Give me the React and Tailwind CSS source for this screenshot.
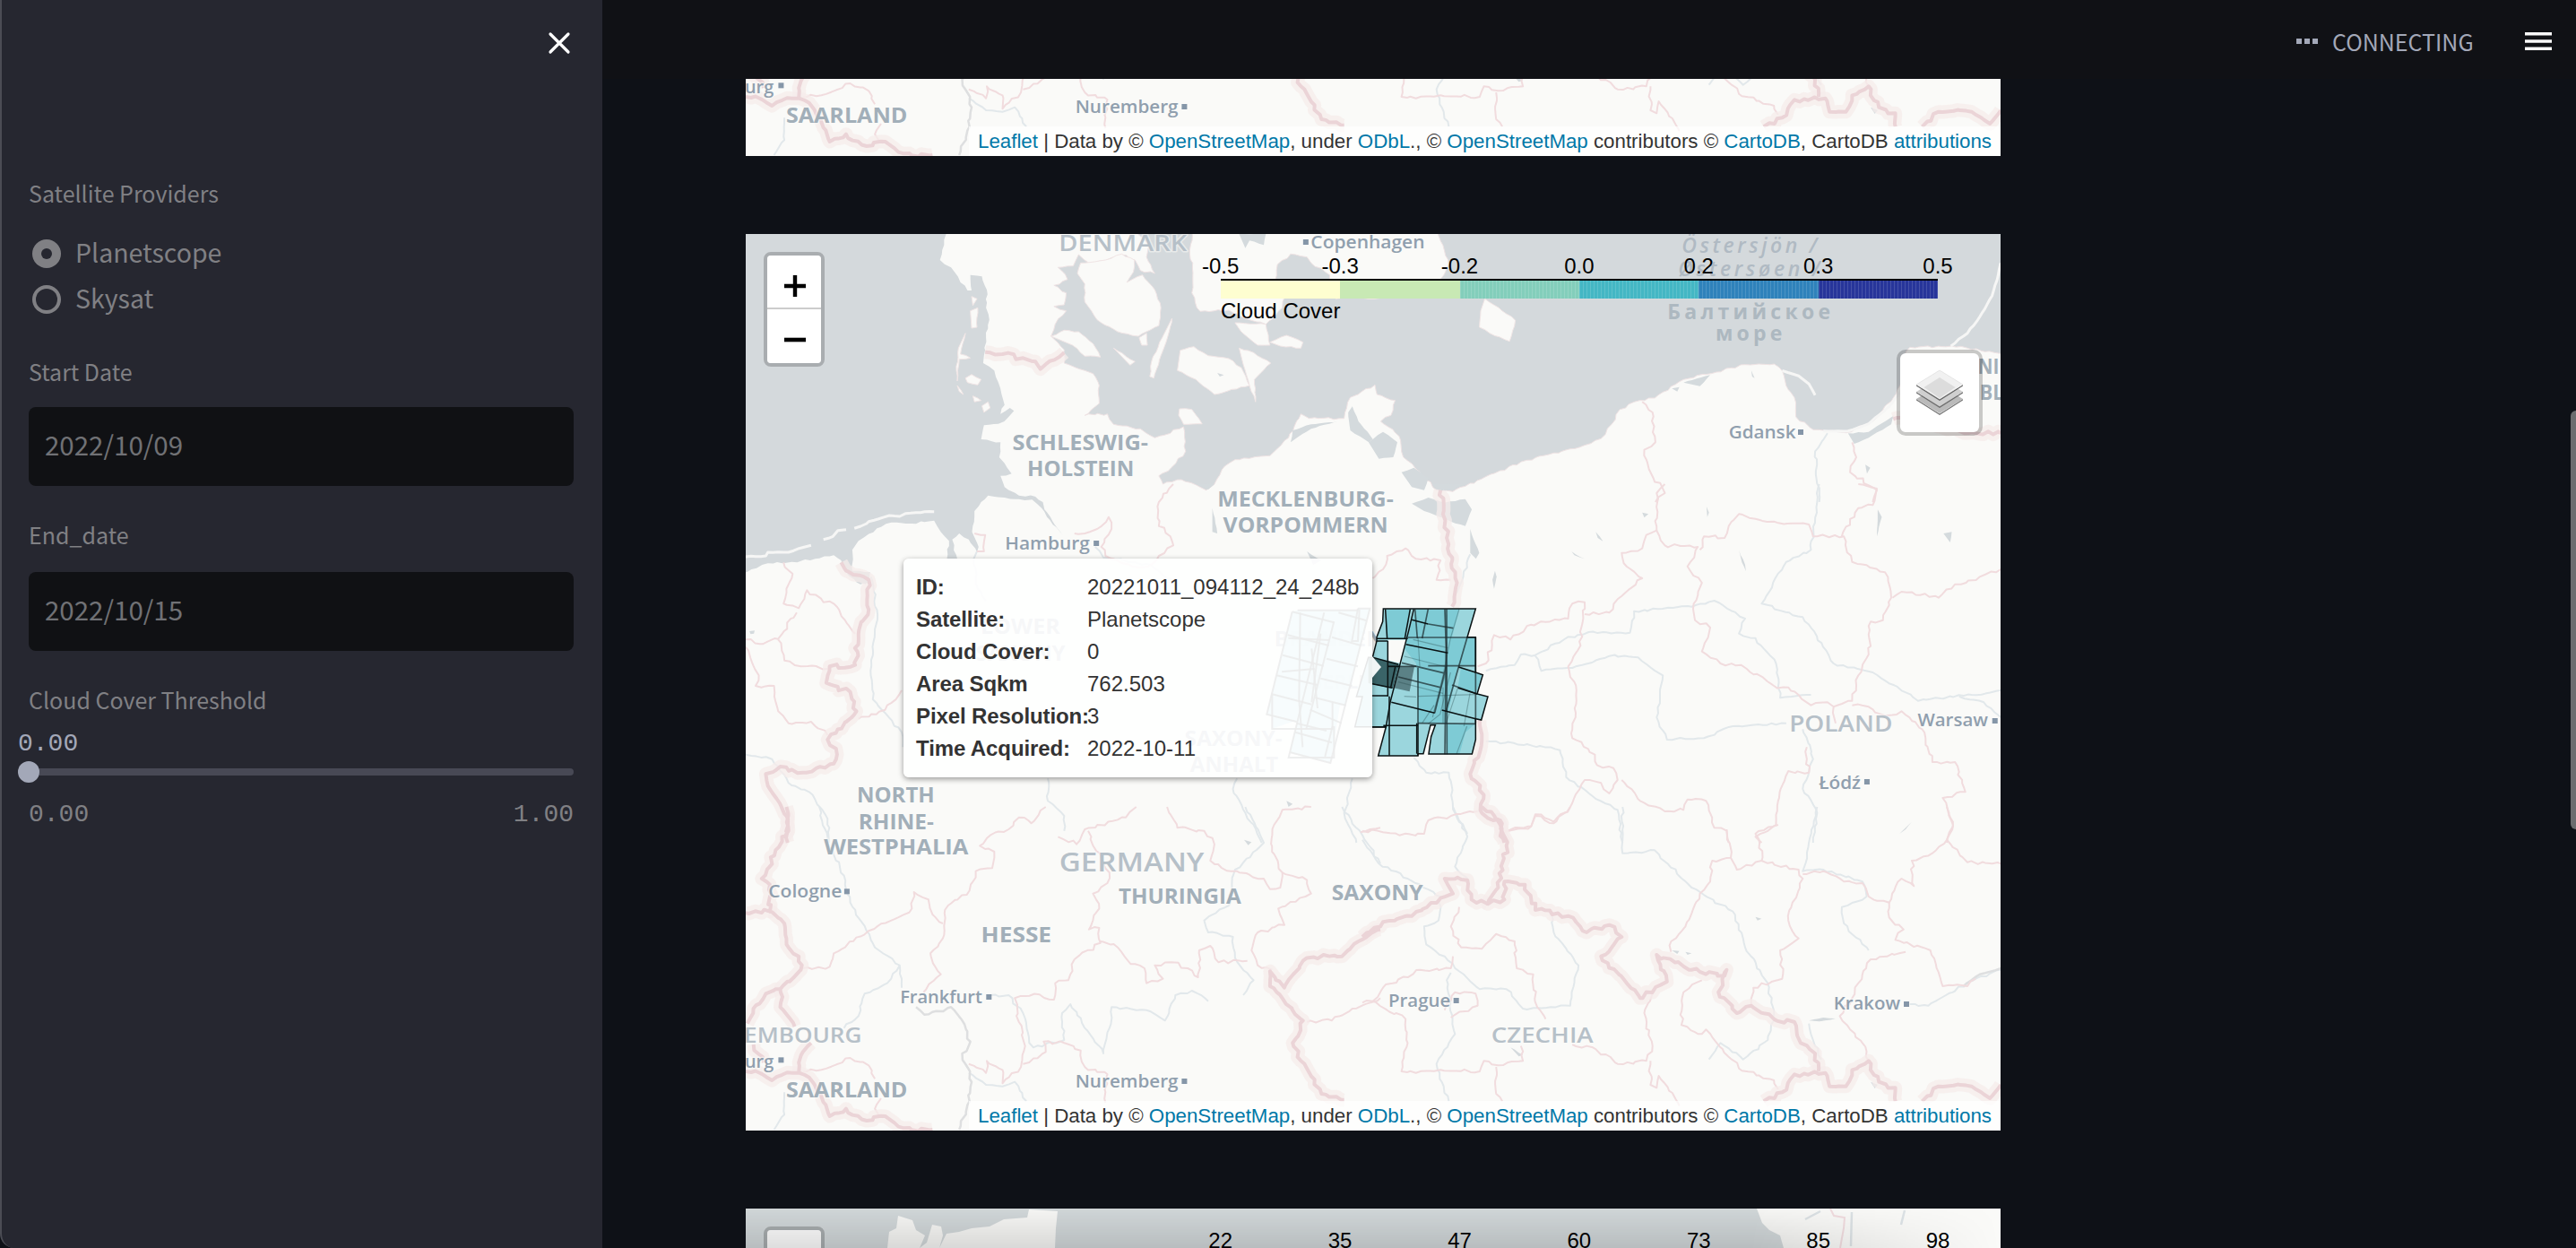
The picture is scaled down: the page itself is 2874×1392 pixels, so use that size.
import React from "react";

/* ---------- map geometry ---------- */

// Every sector has its own local grid; the two numbers are its origin on the map sheet.
const ORIGIN = {
  nw: [820, 60],
  ne: [1520, 60],
  w: [820, 540],
  e: [1520, 540],
  sw: [820, 900],
  se: [1520, 900],
};
const KX = 700 / 1524.5;
const KY = 1 / 3;

const parse = (s) => s.trim().split(/\s+/).map((p) => p.split(",").map(Number));

function project(sector, s) {
  const [ox, oy] = ORIGIN[sector];
  return parse(s).map(([x, y]) => [ox + x * KX, oy + y * KY]);
}

function noise(n) {
  const v = Math.sin(n * 12.9898 + 4.1) * 43758.5453;
  return v - Math.floor(v) - 0.5;
}

// Breaks long straight runs into short wobbly ones, as surveyed lines look.
function roughen(points, amp) {
  const out = [];
  points.forEach((p, i) => {
    out.push(p);
    const q = points[i + 1];
    if (!q) return;
    const d = Math.hypot(q[0] - p[0], q[1] - p[1]);
    const n = Math.min(16, Math.floor(d / 5));
    for (let k = 1; k < n; k++) {
      const t = k / n;
      out.push([
        p[0] + (q[0] - p[0]) * t + noise(p[0] + k * 7.3) * amp,
        p[1] + (q[1] - p[1]) * t + noise(p[1] + k * 3.7) * amp,
      ]);
    }
  });
  return out;
}

const toPath = (points, close) =>
  "M" + points.map((p) => p[0].toFixed(1) + " " + p[1].toFixed(1)).join("L") + (close ? "Z" : "");

const line = (sector, s, amp = 4) => toPath(roughen(project(sector, s), amp), false);
const area = (sector, s, amp = 2.5) => toPath(roughen(project(sector, s), amp), true);

const NORTH_SEA = area(
  "nw",
  "20,595 513,595 513,603 508,640 498,690 525,715 548,765 565,792 575,792 572,740 600,745 612,790 610,850 618,890 610,950 605,1010 603,1035 630,1060 640,1100 648,1140 655,1175 645,1205 668,1185 678,1195 665,1215 640,1238 605,1243 598,1290 645,1300 642,1350 655,1370 672,1405 645,1412 655,1450 690,1478 730,1482 748,1500 752,1525 785,1590 800,1615 790,1600 765,1560 745,1520 722,1492 690,1490 655,1485 615,1478 598,1500 582,1530 576,1600 592,1650 588,1668 568,1625 545,1605 528,1625 540,1690 515,1690 520,1630 500,1600 484,1562 430,1572 380,1568 345,1588 300,1630 285,1660 285,1730 328,1735 328,1772 305,1775 270,1735 258,1695 240,1678 160,1697 80,1705 40,1725 20,1740"
);

const BALTIC = area(
  "nw",
  "975,595 1005,640 1000,680 1020,735 985,725 972,690 940,672 900,692 860,700 835,672 822,710 785,715 808,755 775,775 805,800 800,840 775,845 805,860 778,905 768,945 800,990 800,1035 850,1060 870,1070 885,1110 885,1170 850,1210 905,1205 920,1240 985,1255 1020,1285 1090,1248 1095,1330 1060,1385 1030,1412 1040,1440 1085,1425 1130,1450 1145,1460 1165,1440 1190,1380 1215,1358 1300,1345 1345,1285 1375,1205 1395,1220 1480,1220 1495,1150 1555,1108 1560,1140 1604,1160 1594,1210 1569,1230 1614,1280 1624,1350 1664,1400 1704,1460 1744,1465 1824,1415 1924,1360 2064,1310 2104,1288 2130,1240 2150,1190 2185,1165 2235,1152 2305,1090 2385,1065 2455,1040 2525,1038 2545,1062 2554,1110 2574,1150 2578,1215 2620,1258 2700,1268 2765,1230 2815,1150 2840,1080 2842,1010 2855,982 2955,978 2995,985 3060,1000 3090,1000 3090,595 1707,595 1724,660 1734,705 1714,755 1660,790 1600,815 1460,820 1440,790 1445,740 1400,700 1390,680 1350,670 1318,705 1312,760 1335,815 1330,850 1290,905 1230,880 1200,858 1130,862 1110,800 1112,700 1105,670 1110,595"
);

const LAND_ISLANDS = [
  "832,735 840,700 900,690 940,670 970,690 968,730 952,765 990,740 1020,790 1035,850 1030,910 980,945 930,930 880,890 850,830 850,770",
  "1062,885 1055,930 1035,1010 1018,1085 1008,1080 1012,1030 1038,950",
  "1082,992 1115,980 1150,1010 1200,1020 1230,1050 1250,1110 1165,1140 1120,1090 1075,1060",
  "1225,985 1260,1000 1302,1035 1262,1090 1265,1165 1250,1110 1235,1040",
  "1215,900 1290,905 1300,975 1270,975 1230,930",
  "1300,965 1340,942 1380,965 1375,985 1325,978",
  "768,945 800,925 835,930 870,970 888,1015 850,1012 820,975",
  "1080,1188 1110,1190 1135,1238 1090,1240 1078,1210",
  "560,935 548,1005 572,1018 545,1022 540,1095 538,1060 543,985",
  "560,1085 575,1073 598,1090 590,1108 565,1100",
  "540,1110 555,1140 545,1130",
  "600,1178 615,1165 620,1185 605,1200",
  "578,1145 598,1160 582,1165",
  "572,860 590,850 588,915 575,918",
  "575,812 588,820 578,842",
  "920,985 972,1030 960,1042",
  "982,950 1000,935 1002,975 988,975",
  "1822,820 1864,860 1896,892 1882,962 1834,935 1809,915 1812,860",
].map((s) => area("nw", s, 1.5));

const WATER_BITS = [
  ["nw", "1225,603 1290,603 1285,640 1250,625 1240,650"],
  ["nw", "1172,1068 1188,1075 1178,1080"],
  ["nw", "1500,1180 1515,1230 1550,1290 1540,1300 1495,1260 1490,1200"],
  ["nw", "1350,1300 1355,1260 1400,1240 1465,1230 1400,1255 1370,1280"],
  ["ne", "15,1300 50,1265 85,1300 75,1350 40,1355"],
  ["ne", "95,1400 125,1385 160,1420 150,1460 120,1450"],
  ["ne", "780,1100 845,1075 820,1112"],
  ["ne", "945,1060 953,1085 947,1080"],
  ["ne", "1180,1270 1230,1265 1292,1210 1285,1240 1230,1285 1195,1305"],
  ["ne", "752,1120 770,1115 765,1130"],
  ["ne", "1222,1375 1234,1385 1226,1405"],
  ["e", "120,65 160,45 200,62 250,50 266,85 250,140 215,125 200,115 150,90"],
  ["e", "170,0 245,0 220,20 185,22"],
  ["e", "262,150 275,200 284,230 276,250 262,230"],
  ["e", "322,290 326,310 320,350 316,320"],
  ["e", "508,225 540,250 515,238"],
  ["e", "567,160 585,192 572,180"],
  ["e", "836,75 842,95 838,110"],
  ["e", "915,220 930,270 932,292 922,262"],
  ["e", "1252,85 1262,110 1250,175 1252,120"],
  ["e", "1412,165 1432,160 1428,195"],
  ["e", "680,95 695,100 685,112"],
  ["w", "1160,80 1172,165 1160,160"],
  ["w", "1390,225 1425,255 1405,270"],
  ["w", "300,310 322,312 318,335 305,328"],
  ["w", "35,492 48,490 46,500 38,502"],
  ["w", "1120,0 1165,0 1150,18"],
  ["w", "1340,1060 1355,1070 1345,1080"],
  ["se", "752,480 770,482 765,492"],
  ["se", "785,485 800,490 790,495"],
  ["se", "1085,715 1120,705 1150,708 1110,718"],
  ["se", "955,368 970,374 960,380"],
  ["se", "1305,90 1335,50 1320,75"],
  ["se", "1235,920 1252,930 1245,942"],
  ["se", "360,805 390,830 380,835"],
  ["sw", "1237,110 1255,118 1247,128"],
].map(([k, s]) => area(k, s, 1));

const SAND_BARS = [
  line("w", "26,243 75,240 80,228 130,228 170,210 185,205", 1),
  line("w", "215,185 238,175 250,155 270,152", 1),
  line("w", "290,148 320,132 325,125 375,105 400,108 415,98 440,95 484,92", 1),
  line("ne", "1430,978 1470,935 1500,880 1530,810 1545,740 1551,700", 1),
  line("ne", "1020,1060 1060,1078 1085,1105 1100,1142", 1),
  line("ne", "1120,1262 1180,1262 1230,1238 1280,1180 1320,1110", 1),
];

const STATE_BORDERS = [
  ["w", "118,262 140,300 125,350 118,400 155,415 175,355 215,395 240,400 292,500"],
  ["w", "26,520 60,535 105,518 150,430"],
  ["w", "105,520 120,590 160,610 225,618"],
  ["w", "26,545 58,640 50,675 95,675 105,760 130,800 185,795 225,840"],
  ["w", "405,690 365,755 300,785"],
  ["w", "582,165 608,170 605,225 588,225"],
  ["w", "825,165 850,165 880,150 908,110 915,150 890,210 900,240 965,275 1005,275 1030,240 1065,205 1058,175 1030,140 1030,60 1065,0"],
  ["sw", "458,620 500,560 475,490 505,440 510,345 570,280 585,215 625,205 630,150 595,130 620,95 665,75 690,35 720,55 755,0"],
  ["sw", "165,540 230,535 240,490 325,415 380,380 430,340 435,285 470,310 480,360 505,390"],
  ["sw", "785,100 830,125 850,75 950,35 975,0"],
  ["sw", "858,80 870,130 910,220 905,255 870,290 885,340 860,410 885,405 888,455 825,510 810,580 778,590 775,645 740,628 680,640 690,720 705,800 695,870 650,925 650,880 612,850 610,890 568,860"],
  ["sw", "700,860 755,820 750,785 800,790 840,815 850,870 905,895 900,990"],
  ["sw", "888,450 930,470 955,515 995,540 1000,590 1040,575 1020,530 1060,520 1100,540 1125,570 1128,480 1155,465 1175,520 1245,515"],
  ["sw", "1050,0 1075,70 1140,80 1165,125 1155,180 1205,215 1285,240 1300,275 1325,270 1330,220 1305,150 1310,60 1330,10 1400,0"],
  ["sw", "1330,220 1390,245 1400,290 1320,340 1335,395 1270,420 1255,480 1270,530 1305,545"],
  ["sw", "1520,85 1568,70"],
  ["sw", "165,885 210,880 280,840 325,865 340,910"],
  ["sw", "355,975 340,1010 360,1040"],
  ["sw", "1390,720 1450,715 1500,675 1568,640"],
  ["se", "0,80 50,85 90,95 150,90 160,45 280,15"],
  ["se", "345,85 410,65 420,30 465,55 505,0"],
  ["e", "345,1160 410,1145 420,1105 465,1130 505,1080 540,990 580,1000 600,1035 620,990 610,950 570,940 565,905 510,850 520,690 500,610 530,540 540,395 510,400 500,450 410,470 360,520 320,505 300,600 280,610"],
  ["e", "540,435 600,430 620,385 680,315 635,265 630,230 680,215 690,170 715,155 735,205 815,210 790,275 825,330 805,400 808,455 845,480 825,560 870,600 920,605 1000,675 1035,680 1090,740 1130,730 1145,745 1150,800"],
  ["e", "820,220 830,175 880,180 890,140 915,100 1000,125 1085,135 1095,175 1170,175 1190,260 1270,295 1285,380 1265,455 1235,460 1230,570 1205,640 1190,725 1145,745"],
  ["e", "1165,175 1205,80 1240,70 1250,15 1205,0"],
  ["e", "715,155 715,30 735,0"],
  ["ne", "680,1165 705,1200 712,1300 685,1325 700,1400 735,1470 712,1500"],
  ["ne", "1190,1300 1200,1350 1185,1400 1250,1460 1240,1500"],
  ["e", "1288,380 1310,360 1400,380 1440,335 1500,310 1551,285"],
  ["e", "1190,740 1230,745 1270,775 1310,760 1360,820 1385,930 1440,930 1465,1030 1410,1050 1435,1130 1420,1200"],
  ["e", "630,990 675,1060 735,1095 780,1090 790,1055 835,1060 855,1150 885,1160 890,1200"],
  ["e", "1080,880 1080,920 1085,965 1035,960 1010,1060 1005,1140 955,1180 970,1200"],
  ["e", "25,315 50,285 60,240 105,215 130,250 190,255 180,320 215,320"],
  ["se", "885,75 895,170 850,180 845,250 820,290 785,400 750,450 750,485"],
  ["se", "895,170 910,210 970,180 965,120 955,90 1010,60"],
  ["se", "970,180 1060,210 1070,240 1045,320 1035,380 1060,440 1015,480 1020,575 950,605 945,660"],
  ["se", "1070,225 1120,215 1170,250 1215,255 1230,300 1280,320 1310,240 1340,265 1335,180 1385,155 1420,110 1470,185 1551,190"],
  ["se", "1420,0 1435,60 1420,110"],
  ["se", "1280,320 1280,370 1315,410 1295,445 1380,480 1410,600 1470,600 1490,575"],
  ["se", "1320,485 1235,510 1205,590 1190,640 1160,700 1185,745 1215,790 1230,850"],
  ["se", "235,335 215,400 240,470 290,475 325,425 370,450 375,540 415,560 425,670 445,710"],
  ["se", "220,500 215,540 140,545 50,605 25,650 0,655"],
  ["se", "25,650 105,710 110,790 95,885 130,890 190,880 285,885 295,850 330,865 390,850 385,800"],
  ["se", "325,870 325,960 340,985"],
  ["se", "200,680 225,620 275,625 280,665 215,705"],
  ["se", "510,795 560,805 620,860 690,850 705,800 685,690 715,600"],
  ["se", "700,850 700,930 715,940 720,900 745,950 770,1000"],
  ["se", "825,580 780,620 775,730 825,760 835,745 875,810 915,875 1000,915 1010,945"],
].map(([k, s]) => line(k, s));

const NATIONAL_BORDERS = [
  ["nw", "608,998 650,1005 700,1018 730,1030 742,1055 765,1028 800,1000"],
  ["w", "258,262 270,290 325,320 325,420 300,500 292,605 230,610 222,665 280,695 295,760 225,855 248,905 240,935 165,965 110,945 75,970 80,1010 125,1110 128,1200"],
  ["sw", "125,0 130,80 65,240 85,260 85,350 26,355"],
  ["sw", "85,350 120,390 130,470 155,500 160,545 110,610 110,670 145,735"],
  ["sw", "110,610 75,625 30,725"],
  ["sw", "45,795 70,855"],
  ["sw", "26,885 60,890 90,915 140,890 180,905 210,970 230,1035 270,1010 320,1050 365,1035 410,1075 480,1080"],
  ["sw", "185,790 165,820 155,890"],
  ["sw", "1568,410 1515,450 1475,500 1430,495 1380,515 1335,605 1300,550 1300,600 1380,715 1355,790 1375,850 1425,960 1480,980"],
  ["e", "190,20 205,180 230,330 218,410"],
  ["e", "285,790 290,860 262,970 295,1040 290,1100 335,1140 345,1200"],
  ["se", "290,0 335,45 350,130 330,270 305,325 345,310 345,250 395,260 420,345 500,365 545,420 600,395 630,435 580,500 675,640 740,585 715,495 800,545 880,565 885,545 865,620 910,690 945,665 1000,710 1050,720 1065,790 1100,825 1108,885"],
  ["se", "0,435 50,385 120,365 190,305 220,290 200,240 255,245 265,310 305,325"],
  ["se", "975,985 1020,955 1050,895 1125,890 1135,935 1175,935 1190,880 1230,850 1255,920 1295,940 1295,985"],
  ["se", "1360,985 1400,935 1480,935 1525,975 1551,930"],
  ["ne", "1290,1222 1330,1225 1450,1262 1551,1270"],
].map(([k, s]) => line(k, s, 5));

const RIVERS = [
  ["w", "330,310 345,420 330,640 335,720 405,830 408,880"],
  ["w", "26,905 90,920 130,1000 180,1030 225,1120 228,1200"],
  ["w", "588,225 580,250 590,350 610,390"],
  ["w", "875,210 895,245 1010,270 1065,330"],
  ["w", "760,985 760,1060 800,1110 800,1160"],
  ["w", "1220,985 1210,1020 1240,1100 1280,1200"],
  ["w", "1500,985 1480,1100 1510,1200"],
  ["sw", "205,0 225,120 265,230 280,320 340,470 400,530 405,605"],
  ["sw", "400,530 370,590 315,625 300,700 265,740"],
  ["sw", "620,630 665,630 700,690 715,790 725,805 800,780 795,690 815,660 895,825 910,740 915,670 1000,680 1045,715 1070,630 1110,615 1150,650"],
  ["sw", "1240,0 1285,120 1215,210 1200,330 1140,380 1150,420 1210,435 1215,505 1260,580 1235,630"],
  ["sw", "1475,0 1530,110 1568,190"],
  ["sw", "568,890 610,930 650,935 680,920 708,985"],
  ["sw", "120,955 120,1030 95,1080"],
  ["ne", "1130,1270 1100,1330 1110,1500"],
  ["e", "1110,0 1090,220 1030,260 970,400 1070,445 1145,600 1240,630 1350,725 1480,705 1551,690"],
  ["e", "300,625 370,605 385,570 420,572 490,520 550,495 650,497 660,425 800,410 855,390 930,450 915,500 955,515 1005,600 1015,715 1090,705"],
  ["e", "420,575 435,625 510,615 600,575 670,580 730,640 715,780 740,855 830,850 900,810 1030,800"],
  ["e", "300,860 400,870 480,890 495,980 560,1045 620,1090 632,1200"],
  ["e", "125,915 155,965 210,965 225,1100 255,1170"],
  ["e", "1070,820 1095,920 1070,1020 1105,1100 1095,1200"],
  ["e", "1450,710 1510,730 1551,780"],
  ["e", "262,235 245,310 220,390"],
  ["se", "632,0 632,155 710,145 800,270 900,350 930,470 985,590 1000,700"],
  ["se", "1105,0 1070,215 1120,210 1215,250 1225,300 1165,335 1170,390 1230,480"],
  ["se", "1551,545 1490,575 1375,665 1330,660"],
  ["se", "220,0 255,100 225,200 260,250"],
  ["se", "0,110 40,190 110,240 190,300 185,380 150,400 155,460 200,500 235,550 285,610 350,610 390,675 505,665 525,530 465,420 460,360"],
  ["se", "215,555 205,580 225,760 180,860 210,985"],
  ["se", "1115,845 1095,780 1085,725"],
  ["se", "1000,715 985,780 925,845 870,790 842,845"],
].map(([k, s]) => line(k, s, 3));

const GREY_ROUTES = [
  line("sw", "440,670 460,695 525,670 550,710 572,785 552,825 575,920 570,985 545,1080"),
  line("se", "1460,600 1500,560 1551,540", 1),
];

const label = (text, sector, x1, x2, y, size, tone = "state") => {
  const [ox, oy] = ORIGIN[sector];
  return { text, x: ox + x1 * KX, w: (x2 - x1) * KX, y: oy + y * KY, size, tone };
};

const LABELS = [
  label("DENMARK", "nw", 787, 1098, 660, 25, "country"),
  label("SCHLESWIG-", "nw", 674, 1004, 1325, 24),
  label("HOLSTEIN", "nw", 710, 970, 1412, 24),
  label("MECKLENBURG-", "w", 1172, 1600, 76, 24),
  label("VORPOMMERN", "w", 1186, 1587, 163, 24),
  label("LOWER", "w", 597, 790, 502, 24),
  label("SAXONY", "w", 585, 803, 590, 24),
  label("BRANDENBURG", "w", 1310, 1730, 542, 24),
  label("BERLIN", "w", 1395, 1570, 685, 22),
  label("SAXONY-", "w", 1092, 1330, 877, 24),
  label("ANHALT", "w", 1106, 1320, 962, 24),
  label("NORTH", "w", 296, 485, 1066, 24),
  label("RHINE-", "sw", 300, 483, 74, 24),
  label("WESTPHALIA", "sw", 216, 567, 160, 24),
  label("GERMANY", "sw", 788, 1140, 216, 29, "country"),
  label("THURINGIA", "sw", 932, 1230, 325, 24),
  label("HESSE", "sw", 598, 769, 452, 24),
  label("SAXONY", "sw", 1450, 1672, 312, 24),
  label("SAARLAND", "sw", 124, 419, 971, 24),
  label("EMBOURG", "sw", 22, 308, 789, 24, "country"),
  label("POLAND", "e", 1037, 1288, 829, 26, "country"),
  label("CZECHIA", "se", 313, 561, 789, 24, "country"),
  label("NI", "ne", 1495, 1547, 1072, 24),
  label("BL", "ne", 1500, 1558, 1158, 24),
  label("Cologne", "sw", 81, 260, 304, 20, "city"),
  label("Frankfurt", "sw", 401, 601, 656, 20, "city"),
  label("Nuremberg", "sw", 827, 1077, 938, 20, "city"),
  label("urg", "sw", 24, 94, 872, 20, "city"),
  label("Hamburg", "w", 656, 862, 218, 20, "city"),
  label("Copenhagen", "nw", 1399, 1676, 652, 20, "city"),
  label("Gdansk", "ne", 890, 1053, 1288, 20, "city"),
  label("Warsaw", "e", 1349, 1520, 811, 20, "city"),
  label("Łódź", "e", 1109, 1211, 1020, 20, "city"),
  label("Prague", "se", 63, 214, 670, 20, "city"),
  label("Krakow", "se", 1145, 1307, 678, 20, "city"),
  label("Östersjön /", "ne", 776, 1105, 667, 23, "sea"),
  label("Østersøen /", "ne", 767, 1112, 743, 23, "sea"),
  label("Балтийское", "ne", 741, 1137, 888, 23, "seaBold"),
  label("море", "ne", 858, 1020, 960, 23, "seaBold"),
];

const TONE = {
  state: { fill: "#a2afb9", fontWeight: 700 },
  country: { fill: "#b6c0c8", fontWeight: 600 },
  city: { fill: "#909fae", fontWeight: 600 },
  sea: { fill: "#b0bac3", fontWeight: 600, fontStyle: "italic" },
  seaBold: { fill: "#adb8c0", fontWeight: 700 },
};

const CITY_DOTS = [
  ["sw", 272, 283], ["sw", 617, 636], ["sw", 1092, 918], ["sw", 112, 847], ["w", 878, 198],
  ["nw", 1387, 630], ["ne", 1065, 1266], ["e", 1537, 792], ["e", 1226, 996], ["se", 228, 648], ["se", 1322, 660],
].map(([k, x, y]) => [ORIGIN[k][0] + x * KX, ORIGIN[k][1] + y * KY]);

function BaseMap() {
  return (
    <svg className="block h-[1000px] w-[1400px] shrink-0" viewBox="832 261 1400 1000" fill="none" strokeLinejoin="round">
      <rect x="832" y="261" width="1400" height="1000" fill="#fafaf8" />
      <g fill="#d4d9dc">
        <path d={NORTH_SEA} />
        <path d={BALTIC} stroke="#efe3e4" strokeWidth="1" />
      </g>
      <g fill="#fafaf8" stroke="#f1e6e6" strokeWidth="1">
        {LAND_ISLANDS.map((d, i) => <path key={i} d={d} />)}
      </g>
      <g fill="#d4dadd">{WATER_BITS.map((d, i) => <path key={i} d={d} />)}</g>
      <g stroke="#f6f6f5" strokeWidth="3">{SAND_BARS.map((d, i) => <path key={i} d={d} />)}</g>
      <g stroke="#e2e8eb" strokeWidth="2">{RIVERS.map((d, i) => <path key={i} d={d} />)}</g>
      <g stroke="#dedfe0" strokeWidth="2.5">{GREY_ROUTES.map((d, i) => <path key={i} d={d} />)}</g>
      <g stroke="#f1dcde" strokeWidth="2">{STATE_BORDERS.map((d, i) => <path key={i} d={d} />)}</g>
      <g stroke="#f6eceb" strokeOpacity="0.75" strokeWidth="15">{NATIONAL_BORDERS.map((d, i) => <path key={i} d={d} />)}</g>
      <g stroke="#ebd4d7" strokeWidth="4">{NATIONAL_BORDERS.map((d, i) => <path key={i} d={d} />)}</g>
      <g fontFamily='"Open Sans", sans-serif' stroke="#fafaf8" strokeOpacity="0.55" strokeWidth="3" paintOrder="stroke">
        {LABELS.map((l, i) => (
          <text key={i} x={l.x} y={l.y} fontSize={l.size} textLength={l.w}
            lengthAdjust={l.tone.startsWith("sea") ? "spacing" : "spacingAndGlyphs"}
            style={TONE[l.tone]} strokeWidth={l.tone.startsWith("sea") ? 0 : 3}>
            {l.text}
          </text>
        ))}
      </g>
      <g fill="#8596a8">
        {CITY_DOTS.map(([x, y], i) => <rect key={i} x={x - 3} y={y - 3} width="6" height="6" />)}
      </g>
    </svg>
  );
}

/* ---------- satellite footprints ---------- */

const FOOTPRINT_OUTLINE =
  "490,117 799,117 771,212 799,212 799,330 823,338 804,402 840,411 818,489 799,485 799,555 787,603 642,603 650,545 664,506 648,506 624,602 606,602 606,609 473,609 499,512 395,512 420,411 400,411 440,280 454,280 468,225 468,212 488,160";
const FOOTPRINT_SHADES = [
  "500,118 580,118 565,216 500,216",
  "600,118 696,118 696,250 710,310 740,310 700,500 606,500 606,410 600,300 560,250 575,190",
  "696,118 745,118 720,212 798,212 798,308 750,308 700,308",
  "702,502 798,502 765,530 745,604 702,604",
  "750,312 820,340 800,400 740,380",
];
const FOOTPRINT_LINES = [
  "454,280 540,303", "497,118 503,218", "580,118 562,216", "592,118 575,190 513,430 499,512",
  "468,217 572,217", "505,225 505,410", "468,225 505,225", "585,154 640,168", "566,236 706,265",
  "453,368 520,382", "517,430 662,466", "742,312 799,330", "804,402 740,382", "799,485 686,456",
  "453,408 506,408", "453,513 500,513", "510,410 510,608", "606,500 606,608", "602,500 602,602",
  "530,312 515,380", "505,310 543,310", "799,212 799,330", "799,500 799,485", "490,508 606,508",
];
const FOOTPRINT_MID_LINES = [
  "596,118 604,216", "640,118 620,216", "696,118 700,250 696,604", "702,118 703,604", "572,213 799,213",
  "640,168 724,182", "552,298 692,332", "540,345 680,380", "662,466 700,310",
  "720,372 804,402", "799,308 640,308", "799,502 606,500", "606,314 606,500",
  "771,212 742,312 700,460", "799,330 799,485", "505,310 600,310",
];
const FOOTPRINT_SOFT_LINES = [
  "744,118 715,215 690,340 655,480", "590,220 706,248", "560,276 700,312", "540,362 690,400",
  "606,410 799,404", "770,510 735,603", "700,330 660,460", "715,330 680,470 640,502",
  "606,212 612,310", "740,380 700,500", "780,400 760,510", "560,410 600,412", "620,500 660,440",
  "690,500 690,380",
];
const LEFT_STRIP = "185,127 203,122 405,122 405,116 445,116 363,440 345,440 313,633 175,598 173,614 200,500 195,492 118,518 118,478 100,470";
const LEFT_LINES = [
  "185,127 100,470 200,495", "203,122 405,122", "405,116 445,116 313,633 180,598", "118,405 118,519 320,519 320,430",
  "325,160 232,520", "292,130 173,615 325,615 325,510", "185,127 325,163", "170,205 308,240", "153,272 290,308",
  "133,340 270,372", "115,402 250,437", "300,284 405,310", "280,350 385,375", "262,415 365,440", "340,130 432,156",
  "318,212 415,240", "405,116 385,225 405,225 410,120", "200,500 300,525", "195,530 318,565", "245,455 350,500",
  "320,510 295,612", "212,130 208,420 220,580", "172,215 310,222", "150,328 260,318", "250,250 270,450",
  "280,200 250,430",
];

const poly = (s) => "M" + s.replace(/ /g, "L");

function Footprints() {
  return (
    <svg className="absolute left-[548px] top-[379px] h-[240px] w-[320px]" viewBox="0 0 960 720" fill="none">
      <path d={poly(FOOTPRINT_OUTLINE) + "Z"} fill="#9bd6dd" />
      <path d={poly(LEFT_STRIP) + "Z"} fill="#a5dbe4" fillOpacity="0.9" />
      <g fill="#5cbecb" fillOpacity="0.45">
        {FOOTPRINT_SHADES.map((s) => <path key={s} d={poly(s) + "Z"} />)}
      </g>
      <path d="M507 221L568 221L549 300L507 290Z" fill="#fafaf8" />
      <path d="M440 278L543 302L522 384L440 366Z" fill="#3a6468" />
      <path d="M543 310L594 310L578 394L524 382Z" fill="#5b8186" />
      <g stroke="#27474b" strokeOpacity="0.35" strokeWidth="3.5">
        {FOOTPRINT_SOFT_LINES.map((s) => <path key={s} d={poly(s)} />)}
      </g>
      <g stroke="#1c2a2c" strokeOpacity="0.72" strokeWidth="5">
        {FOOTPRINT_MID_LINES.map((s) => <path key={s} d={poly(s)} />)}
      </g>
      <g stroke="#0a1213" strokeWidth="4.5">
        {FOOTPRINT_LINES.map((s) => <path key={s} d={poly(s)} />)}
        <path d={poly(FOOTPRINT_OUTLINE) + "Z"} />
      </g>
      <g stroke="#3b3f40" strokeWidth="6" strokeOpacity="0.85">
        {LEFT_LINES.map((s) => <path key={s} d={poly(s)} />)}
      </g>
    </svg>
  );
}

/* ---------- map overlays ---------- */

function Attribution() {
  return (
    <div className="absolute bottom-0 right-0 flex h-[33px] w-[1151px] items-center bg-white/70 px-[10px] font-['Liberation_Sans',Arial,sans-serif] text-[22px]">
      <svg className="h-[33px] w-[1131px] overflow-visible">
        <text x="0" y="24" textLength="1131" lengthAdjust="spacingAndGlyphs" fill="#333">
          <tspan fill="#0078a8">Leaflet</tspan> | Data by © <tspan fill="#0078a8">OpenStreetMap</tspan>, under{" "}
          <tspan fill="#0078a8">ODbL</tspan>., © <tspan fill="#0078a8">OpenStreetMap</tspan> contributors ©{" "}
          <tspan fill="#0078a8">CartoDB</tspan>, CartoDB <tspan fill="#0078a8">attributions</tspan>
        </text>
      </svg>
    </div>
  );
}

function ZoomControl() {
  return (
    <div className="absolute left-5 top-5 w-[68px] rounded-lg border-4 border-black/20 bg-clip-padding">
      <div className="flex h-[60px] items-center justify-center rounded-t-[4px] border-b-2 border-[#ccc] bg-white">
        <svg className="ml-[2px] mt-[10px] size-6" viewBox="0 0 24 24"><path d="M0 12H24M12 0V24" stroke="#000" strokeWidth="4.4" /></svg>
      </div>
      <div className="flex h-[60px] items-center justify-center rounded-b-[4px] bg-white">
        <svg className="ml-[2px] mt-[12px] size-6" viewBox="0 0 24 24"><path d="M0 10H24" stroke="#000" strokeWidth="4.6" /></svg>
      </div>
    </div>
  );
}

const SCALE_COLORS = ["#fefed0", "#c8e9b4", "#83cebb", "#44b7c4", "#2f82bb", "#27359a"];

function Legend({ ticks, caption }) {
  return (
    <div className="absolute left-[463px] top-[21px] w-[934px] font-['Liberation_Sans',Arial,sans-serif] text-2xl leading-[29px] text-black">
      <div className="flex">
        {ticks.map((t) => (
          <span key={t} className="w-[133.4px] shrink-0 text-center">{t}</span>
        ))}
      </div>
      <div className="ml-[67px] flex h-[22px] w-[800px] border-t-2 border-black">
        {SCALE_COLORS.map((c, i) => (
          <div key={c} className="flex-1" style={{
            backgroundColor: c,
            backgroundImage: i > 1 ? "repeating-linear-gradient(90deg, rgba(255,255,255,.14) 0 1px, transparent 1px 4px)" : "none",
          }} />
        ))}
      </div>
      {caption && <div className="-mt-px ml-[67px]">{caption}</div>}
    </div>
  );
}

function LayersControl() {
  return (
    <div className="absolute right-5 top-[129px] flex size-24 items-center justify-center rounded-[10px] border-4 border-black/20 bg-white bg-clip-padding">
      <svg className="size-[52px]" viewBox="0 0 52 52">
        <path d="M0 33L26 49.500L52 33V34.500L26 51L0 34.500Z" fill="#777" />
        <path d="M0 33L26 17L52 33L26 49Z" fill="#bababa" />
        <path d="M0 25L26 41.500L52 25V26.500L26 43L0 26.500Z" fill="#6c6c6c" />
        <path d="M0 25L26 9L52 25L26 41Z" fill="#cfcfcf" />
        <path d="M0 17L26 33.500L52 17V18.500L26 35L0 18.500Z" fill="#666" />
        <path d="M0 17L26 1L52 17L26 33Z" fill="#f1f1f1" />
        <path d="M8.500 20L26 9L43.500 20L26 32Z" fill="#dcdcdc" />
        <path d="M0 17L26 1L52 17" fill="none" stroke="#ddd" strokeWidth="0.7" />
      </svg>
    </div>
  );
}

const TOOLTIP_ROWS = [
  ["ID:", "20221011_094112_24_248b"],
  ["Satellite:", "Planetscope"],
  ["Cloud Cover:", "0"],
  ["Area Sqkm", "762.503"],
  ["Pixel Resolution:", "3"],
  ["Time Acquired:", "2022-10-11"],
];

function FootprintTooltip() {
  return (
    <div className="absolute left-[176px] top-[362px] h-[244px] w-[523px] rounded-md bg-white/90 pl-[14px] pt-[14px] font-['Liberation_Sans',Arial,sans-serif] text-2xl leading-9 text-[#333] shadow-[0_2px_6px_rgba(0,0,0,0.4)]">
      {TOOLTIP_ROWS.map(([k, v]) => (
        <div key={k} className="flex whitespace-nowrap">
          <span className="w-[191px] shrink-0 font-bold tracking-[-0.1px]">{k}</span>
          <span>{v}</span>
        </div>
      ))}
      <div className="absolute left-full top-[109px] h-6 w-[10px] bg-[#f1f5f5] [clip-path:polygon(0_0,100%_50%,0_100%)]" />
    </div>
  );
}

/* ---------- page ---------- */

const UI_FONT = "font-['Noto_Sans_CJK_SC',sans-serif]";

const FieldLabel = ({ children, className = "" }) => (
  <div className={"h-[34px] text-[25px] leading-[34px] text-[#808084] " + className}>{children}</div>
);

const DateInput = ({ value }) => (
  <div className="flex h-[88px] items-center rounded-lg bg-[#101114] px-[18px] pb-[5px] text-[29.500px] text-[#707175]">{value}</div>
);

const Radio = ({ label: text, checked }) => (
  <div className="flex h-[51px] items-center gap-4 pl-1 text-[28.500px] text-[#808084]">
    <span className="flex size-8 items-center justify-center rounded-full bg-[#808084]">
      <span className={checked ? "size-3 rounded-full bg-[#262730]" : "size-6 rounded-full bg-[#262730]"} />
    </span>
    <span className="pb-[3px] leading-[40px]">{text}</span>
  </div>
);

function Sidebar() {
  return (
    <aside className={"h-full w-[672px] shrink-0 rounded-bl-2xl border-l-2 border-[#4b4c54] bg-[#262730] pl-[30px] pr-8 " + UI_FONT}>
      <div className="flex h-[96px] justify-end">
        <svg className="mr-1 mt-[35px] size-6 overflow-visible" viewBox="0 0 24 24">
          <path d="M2 3L22 23M22 3L2 23" stroke="#fff" strokeWidth="3.200" strokeLinecap="round" />
        </svg>
      </div>
      <FieldLabel className="mt-[102px]">Satellite Providers</FieldLabel>
      <div className="mt-[25px]">
        <Radio label="Planetscope" checked />
        <Radio label="Skysat" />
      </div>
      <FieldLabel className="mb-[23px] mt-[38px]">Start Date</FieldLabel>
      <DateInput value="2022/10/09" />
      <FieldLabel className="mb-[25px] mt-[37px]">End_date</FieldLabel>
      <DateInput value="2022/10/15" />
      <FieldLabel className="mt-[37px]">Cloud Cover Threshold</FieldLabel>
      <div className="-ml-3 mt-[17px] h-8 font-['Liberation_Mono',monospace] text-[28px] leading-8 text-[#a3a8b8]">0.00</div>
      <div className="-ml-3 mt-[3px] flex h-6 items-center">
        <div className="z-10 size-6 rounded-full bg-[#a3a8b8]" />
        <div className="-ml-3 h-2 flex-1 rounded-r-full bg-[#484955]" />
      </div>
      <div className="mt-5 flex h-8 justify-between font-['Liberation_Mono',monospace] text-[28px] leading-8 text-[#808084]">
        <span>0.00</span>
        <span>1.00</span>
      </div>
    </aside>
  );
}

function Header() {
  return (
    <header className={"flex h-[88px] shrink-0 items-start justify-end bg-[#101115] pr-[27px] " + UI_FONT}>
      <div className="mt-[43px] flex gap-[3px]">
        <span className="size-[6px] bg-[#a3a8b8]" />
        <span className="size-[6px] bg-[#a3a8b8]" />
        <span className="size-[6px] bg-[#a3a8b8]" />
      </div>
      <div className="ml-[16px] mt-[26px] w-[158px] text-[25px] leading-[40px] text-[#a3a8b8]">CONNECTING</div>
      <svg className="ml-[57px] mt-9 h-5 w-[30px]" viewBox="0 0 30 20">
        <path d="M0 1.700H30M0 10H30M0 18.300H30" stroke="#fafafa" strokeWidth="3.400" />
      </svg>
    </header>
  );
}

function NextMap() {
  return (
    <div className="relative h-[44px] w-[1400px] overflow-hidden bg-[#d4dadc]">
      <svg className="block h-[44px] w-[1400px]" viewBox="832 1348 1400 44">
        <path d="M990 1392L992 1374L1000 1370L1002 1356L1018 1361L1022 1372L1032 1378L1026 1392L1034 1386L1040 1366L1050 1368L1052 1378L1048 1392L1056 1376L1070 1374L1084 1370L1104 1368L1120 1360L1146 1358L1148 1349L1180 1351L1178 1370L1177 1392Z" fill="#fafaf8" />
        <path d="M1960 1348L1966 1364L1974 1372L1986 1378L1990 1392H2232V1348Z" fill="#fafaf8" />
        <path d="M2042 1348L2046 1356L2058 1358L2057 1370L2053 1392" fill="none" stroke="#f2dde0" strokeWidth="2" />
        <path d="M2066 1352L2065 1390M2125 1350L2121 1366M2014 1360L2031 1351" fill="none" stroke="#dde3e6" strokeWidth="2.500" />
      </svg>
      <ZoomControl />
      <div className="absolute inset-0 bg-linear-to-b from-black/2 to-black/13 [mask-image:linear-gradient(90deg,#000_80%,transparent)]" />
      <Legend ticks={["22", "35", "47", "60", "73", "85", "98"]} />
    </div>
  );
}

export default function App() {
  return (
    <div className="flex h-[1392px] w-[2874px] overflow-hidden bg-[#0e1117]">
      <Sidebar />
      <main className="relative flex min-w-0 flex-1 flex-col">
        <Header />
        <div className="ml-[160px] flex w-[1400px] flex-col gap-[87px]">
          <section className="relative flex h-[86px] flex-col justify-end overflow-hidden">
            <BaseMap />
            <Attribution />
          </section>
          <section className="relative h-[1000px] overflow-hidden">
            <BaseMap />
            <Footprints />
            <ZoomControl />
            <Legend ticks={["-0.5", "-0.3", "-0.2", "0.0", "0.2", "0.3", "0.5"]} caption="Cloud Cover" />
            <LayersControl />
            <FootprintTooltip />
            <Attribution />
          </section>
          <NextMap />
        </div>
        <div className="absolute right-0 top-[458px] h-[467px] w-[6px] rounded-l-md bg-[#6b6c6f]" />
      </main>
    </div>
  );
}
